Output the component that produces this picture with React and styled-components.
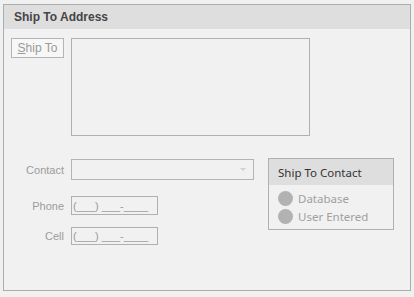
import styled, { createGlobalStyle } from "styled-components"

const Global = createGlobalStyle`
body {
  margin: 0;
  background: #f0f0f0;
  font-family: "Liberation Sans", Arial, sans-serif;
}
`

const Page = styled.div`
width: 414px;
height: 297px;
padding: 4px 0 0 3px;
box-sizing: border-box;
background: #f0f0f0;
`

const Panel = styled.div`
width: 408px;
height: 287px;
box-sizing: border-box;
border: 1px solid #adadad;
background: #f1f1f1;
display: flex;
flex-direction: column;
`

const PanelHeader = styled.div`
height: 24px;
background: #dedede;
padding-left: 10px;
display: flex;
align-items: center;
font-weight: bold;
font-size: 12px;
color: #454545;
`

const Body = styled.div`
padding: 9px 0 0 7px;
display: flex;
flex-direction: column;
`

const TopRow = styled.div`
display: flex;
gap: 7px;
`

const LinkButton = styled.div`
width: 53px;
height: 20px;
box-sizing: border-box;
border: 1px solid #b4b4b4;
background: #f7f7f7;
color: #9a9a9a;
font-size: 12px;
display: flex;
align-items: center;
justify-content: center;
u { text-decoration: underline; }
`

const AddressBox = styled.div`
width: 239px;
height: 98px;
box-sizing: border-box;
border: 1px solid #b0b0b0;
background: #f1f1f1;
`

const Bottom = styled.div`
display: flex;
gap: 14px;
margin-top: 22px;
`

const Fields = styled.div`
display: flex;
flex-direction: column;
`

const Row = styled.div`
display: flex;
align-items: center;
gap: 7px;
margin-top: ${p => p.$top || 0}px;
`

const Label = styled.div`
width: 53px;
text-align: right;
font-size: 11px;
color: #9c9c9c;
`

const Combo = styled.div`
width: 183px;
height: 21px;
box-sizing: border-box;
border: 1px solid #b4b4b4;
background: #f1f1f1;
display: flex;
align-items: center;
justify-content: flex-end;
padding-right: 7px;
`

const Arrow = styled.div`
width: 0;
height: 0;
border-left: 3px solid transparent;
border-right: 3px solid transparent;
border-top: 3px solid #d0d0d0;
`

const MaskField = styled.div`
width: 87px;
height: ${p => p.$h}px;
box-sizing: border-box;
border: 1px solid #b0b0b0;
background: #f1f1f1;
padding-left: 1px;
display: flex;
align-items: center;
font-size: 11px;
color: #9a9a9a;
white-space: pre;
`

const Group = styled.div`
width: 126px;
height: 72px;
box-sizing: border-box;
border: 1px solid #b0b0b0;
background: #f1f1f1;
`

const GroupHeader = styled.div`
height: 26px;
background: #dedede;
padding-left: 9px;
display: flex;
align-items: center;
font-family: "Noto Sans", "Open Sans", sans-serif;
font-size: 11.5px;
color: #333;
`

const Options = styled.div`
padding: 6px 0 0 9px;
display: flex;
flex-direction: column;
gap: 3px;
`

const Option = styled.div`
display: flex;
align-items: center;
gap: 5px;
height: 15px;
font-family: "Noto Sans", "Open Sans", sans-serif;
font-size: 11.5px;
color: #a0a0a0;
`

const Dot = styled.div`
width: 15px;
height: 15px;
border-radius: 50%;
background: #b2b2b2;
`

export default function App() {
  return (
    <Page>
      <Global />
      <Panel>
        <PanelHeader>Ship To Address</PanelHeader>
        <Body>
          <TopRow>
            <LinkButton><span><u>S</u>hip To</span></LinkButton>
            <AddressBox />
          </TopRow>
          <Bottom>
            <Fields>
              <Row $top={1}>
                <Label>Contact</Label>
                <Combo><Arrow /></Combo>
              </Row>
              <Row $top={16}>
                <Label>Phone</Label>
                <MaskField $h={19}>(___) ___-____</MaskField>
              </Row>
              <Row $top={12}>
                <Label>Cell</Label>
                <MaskField $h={18}>(___) ___-____</MaskField>
              </Row>
            </Fields>
            <Group>
              <GroupHeader>Ship To Contact</GroupHeader>
              <Options>
                <Option><Dot />Database</Option>
                <Option><Dot />User Entered</Option>
              </Options>
            </Group>
          </Bottom>
        </Body>
      </Panel>
    </Page>
  )
}
